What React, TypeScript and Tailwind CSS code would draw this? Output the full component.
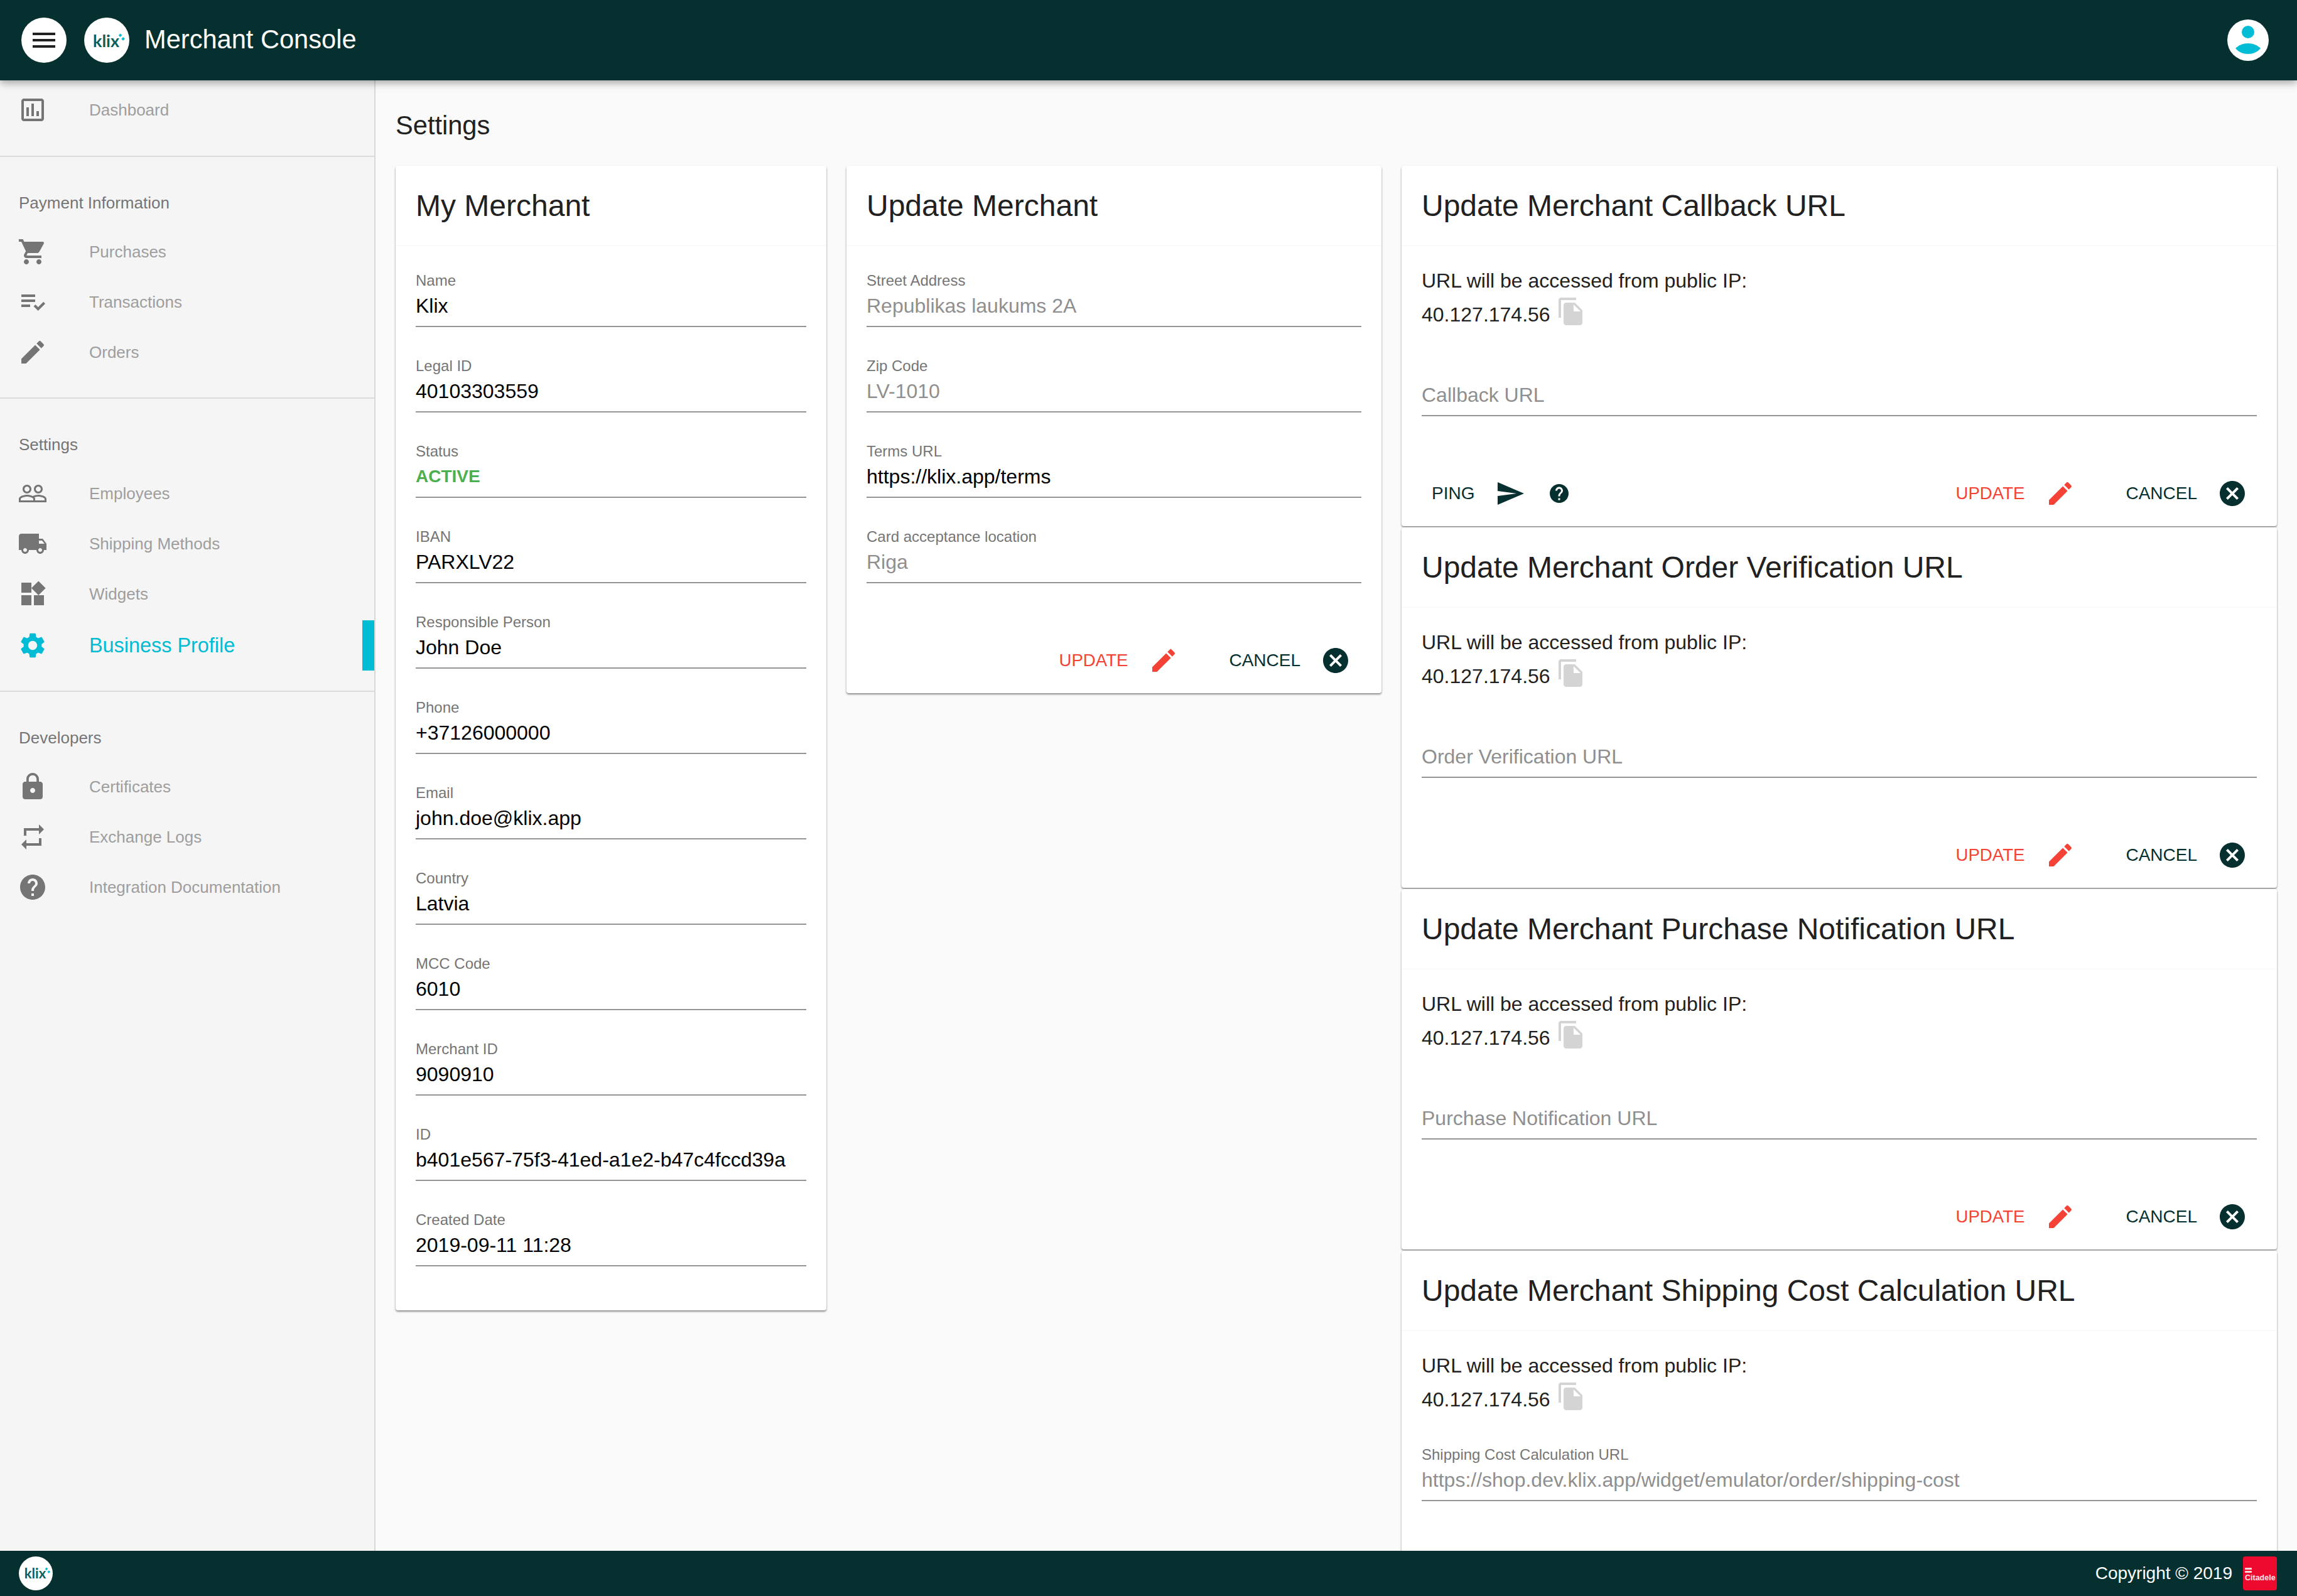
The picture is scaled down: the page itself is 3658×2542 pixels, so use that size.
import React from "react";
import {
  MdCancel,
  MdEdit,
  MdFileCopy,
  MdHelp,
  MdLocalShipping,
  MdLock,
  MdMenu,
  MdOutlineAssessment,
  MdPeopleOutline,
  MdPlaylistAddCheck,
  MdRepeat,
  MdSend,
  MdSettings,
  MdShoppingCart,
  MdWidgets,
} from "react-icons/md";
import type { IconType } from "react-icons";

interface NavEntry {
  label: string;
  icon: IconType;
  active?: boolean;
}

const paymentNav: NavEntry[] = [
  { label: "Purchases", icon: MdShoppingCart },
  { label: "Transactions", icon: MdPlaylistAddCheck },
  { label: "Orders", icon: MdEdit },
];

const settingsNav: NavEntry[] = [
  { label: "Employees", icon: MdPeopleOutline },
  { label: "Shipping Methods", icon: MdLocalShipping },
  { label: "Widgets", icon: MdWidgets },
  { label: "Business Profile", icon: MdSettings, active: true },
];

const developerNav: NavEntry[] = [
  { label: "Certificates", icon: MdLock },
  { label: "Exchange Logs", icon: MdRepeat },
  { label: "Integration Documentation", icon: MdHelp },
];

const merchantFields = [
  { label: "Name", value: "Klix" },
  { label: "Legal ID", value: "40103303559" },
  { label: "Status", value: "ACTIVE", status: true },
  { label: "IBAN", value: "PARXLV22" },
  { label: "Responsible Person", value: "John Doe" },
  { label: "Phone", value: "+37126000000" },
  { label: "Email", value: "john.doe@klix.app" },
  { label: "Country", value: "Latvia" },
  { label: "MCC Code", value: "6010" },
  { label: "Merchant ID", value: "9090910" },
  { label: "ID", value: "b401e567-75f3-41ed-a1e2-b47c4fccd39a" },
  { label: "Created Date", value: "2019-09-11 11:28" },
];

const urlCards = [
  { title: "Update Merchant Callback URL", placeholder: "Callback URL", ping: true, actions: true },
  { title: "Update Merchant Order Verification URL", placeholder: "Order Verification URL", actions: true },
  { title: "Update Merchant Purchase Notification URL", placeholder: "Purchase Notification URL", actions: true },
  {
    title: "Update Merchant Shipping Cost Calculation URL",
    label: "Shipping Cost Calculation URL",
    value: "https://shop.dev.klix.app/widget/emulator/order/shipping-cost",
  },
];

const KlixLogo = ({ big }: { big?: boolean }) => (
  <div
    className={`flex items-center justify-center rounded-full bg-white ${
      big ? "h-[72px] w-[72px] pr-[2px]" : "h-[54px] w-[54px] pr-[2px]"
    }`}
  >
    <span
      className={`relative font-['Lato',sans-serif] font-bold text-[#0b5f5c] ${
        big ? "text-[27px] leading-[27px]" : "text-[22px] leading-[22px]"
      }`}
    >
      klix
      <svg
        viewBox="0 0 12 14"
        className={`absolute ${
          big ? "-right-[10px] top-[2px] h-[14px] w-[12px]" : "-right-[8px] top-[1px] h-[12px] w-[10px]"
        }`}
      >
        <path d="M3.500 .5L6.500 3 3.500 6 .8 3.200zM8 6l3 2.700-3 3-2.700-2.800z" fill="#00bcd4" />
      </svg>
    </span>
  </div>
);

const NavItem = ({ item }: { item: NavEntry }) => {
  const Icon = item.icon;
  return (
    <div className={`relative flex h-[80px] items-center pl-[28px] ${item.active ? "mt-[2px]" : ""}`}>
      <Icon size={48} className={item.active ? "text-[#00bcd4]" : "text-[#757575]"} />
      <span
        className={`ml-[66px] ${
          item.active ? "text-[32.4px] text-[#00bcd4]" : "text-[26px] text-[#9e9e9e]"
        }`}
      >
        {item.label}
      </span>
      {item.active && <div className="absolute right-0 top-0 h-[80px] w-[19px] bg-[#00bcd4]" />}
    </div>
  );
};

const NavGroup = ({ title, items }: { title: string; items: NavEntry[] }) => (
  <div className="border-t-2 border-[#dcdcdc] pb-[32px] pt-[54px]">
    <div className="mb-[19px] pl-[30px] text-[26px] leading-[38px] text-[#757575]">{title}</div>
    {items.map((item) => (
      <NavItem key={item.label} item={item} />
    ))}
  </div>
);

const Field = ({
  label,
  value,
  muted,
  status,
  placeholder,
}: {
  label?: string;
  value?: string;
  muted?: boolean;
  status?: boolean;
  placeholder?: string;
}) => {
  let valueClass = "text-[32px] text-black";
  if (status) valueClass = "text-[28px] font-bold text-[#4caf50]";
  else if (placeholder || muted) valueClass = "text-[32px] text-[#8f8f8f]";

  return (
    <div className="border-b-2 border-[#949494] pb-[12px]">
      <div className="h-[28px] text-[24px] leading-[28px] text-[#757575]">{label}</div>
      <div className={`mt-[6px] h-[40px] leading-[40px] ${valueClass}`}>{value || placeholder}</div>
    </div>
  );
};

const CardTitle = ({ children }: { children: React.ReactNode }) => (
  <div className="flex h-[128px] items-center border-b-2 border-[#fafafa] px-[32px] pt-[2px] text-[48px] text-[#212121]">
    {children}
  </div>
);

const Actions = () => (
  <div className="flex items-center">
    <button className="text-[27.6px] text-[#f44336]">UPDATE</button>
    <MdEdit size={48} className="ml-[33px] text-[#f44336]" />
    <button className="ml-[80px] text-[28px] text-[#05302f]">CANCEL</button>
    <MdCancel size={48} className="ml-[32px] text-[#05302f]" />
  </div>
);

const cardClass = "rounded-[4px] bg-white shadow-[0_2px_3px_rgba(0,0,0,0.45)]";

const App = () => {
  return (
    <div className="flex h-[2542px] w-[3658px] flex-col overflow-hidden bg-[#fafafa] font-['Liberation_Sans',Arial,sans-serif]">
      <header className="relative z-10 flex h-[128px] shrink-0 items-center bg-[#05302f] pl-[34px] pr-[45px] shadow-[0_4px_12px_rgba(0,0,0,0.35)]">
        <button className="flex h-[72px] w-[72px] items-center justify-center rounded-full bg-white">
          <MdMenu size={48} className="text-[#212121]" />
        </button>
        <div className="ml-[28px]">
          <KlixLogo big />
        </div>
        <div className="mb-[2px] ml-[24px] text-[41.6px] text-white">Merchant Console</div>
        <svg viewBox="0 0 66 66" className="ml-auto h-[66px] w-[66px]">
          <circle cx="33" cy="33" r="33" fill="#fff" />
          <circle cx="33" cy="20" r="10" fill="#00bcd4" />
          <path d="M13 46c5-5 12-8 20-8s15 3 20 8c-5 6-12 9-20 9s-15-3-20-9z" fill="#00bcd4" />
        </svg>
      </header>

      <div className="flex min-h-0 flex-1">
        <aside className="w-[598px] shrink-0 border-r-2 border-[#d8d8d8] bg-[#f5f5f5]">
          <div className="pb-[33px] pt-[7px]">
            <NavItem item={{ label: "Dashboard", icon: MdOutlineAssessment }} />
          </div>
          <NavGroup title="Payment Information" items={paymentNav} />
          <NavGroup title="Settings" items={settingsNav} />
          <NavGroup title="Developers" items={developerNav} />
        </aside>

        <main className="min-w-0 flex-1 overflow-hidden px-[32px] pt-[48px]">
          <h1 className="mb-[40px] text-[41.6px] leading-[48px] text-[#212121]">Settings</h1>
          <div className="flex items-start gap-[32px]">
            {/* My Merchant */}
            <section className={`w-[686px] shrink-0 ${cardClass}`}>
              <CardTitle>My Merchant</CardTitle>
              <div className="flex flex-col gap-[48px] px-[32px] pb-[70px] pt-[41px]">
                {merchantFields.map((field) => (
                  <Field key={field.label} label={field.label} value={field.value} status={field.status} />
                ))}
              </div>
            </section>

            {/* Update Merchant */}
            <section className={`w-[852px] shrink-0 ${cardClass}`}>
              <CardTitle>Update Merchant</CardTitle>
              <div className="flex flex-col gap-[48px] px-[32px] pt-[41px]">
                <Field label="Street Address" value="Republikas laukums 2A" muted />
                <Field label="Zip Code" value="LV-1010" muted />
                <Field label="Terms URL" value="https://klix.app/terms" />
                <Field label="Card acceptance location" value="Riga" muted />
              </div>
              <div className="flex justify-end pb-[28px] pr-[49px] pt-[99px]">
                <Actions />
              </div>
            </section>

            {/* URL cards */}
            <div className="flex min-w-0 flex-1 flex-col gap-[2px]">
              {urlCards.map((card) => (
                <section key={card.title} className={`h-[574px] ${cardClass}`}>
                  <CardTitle>{card.title}</CardTitle>
                  <div className="px-[32px] pt-[35px]">
                    <div className="text-[32px] leading-[40px] text-[#212121]">URL will be accessed from public IP:</div>
                    <div className="mt-[14px] flex h-[40px] items-center text-[32px] leading-[40px] text-[#212121]">
                      40.127.174.56
                      <MdFileCopy size={48} className="-mt-[10px] ml-[9px] text-[#d4d4d4]" />
                    </div>
                    <div className="mt-[54px]">
                      <Field label={card.label} value={card.value} placeholder={card.placeholder} muted={Boolean(card.value)} />
                    </div>
                  </div>
                  {card.actions && (
                    <div className="flex items-center justify-between pb-[28px] pl-[48px] pr-[47px] pt-[99px]">
                      <div className="flex items-center">
                        {card.ping && (
                          <>
                            <span className="text-[28px] text-[#05302f]">PING</span>
                            <MdSend size={48} className="ml-[33px] text-[#05302f]" />
                            <MdHelp size={36} className="ml-[36px] text-[#05302f]" />
                          </>
                        )}
                      </div>
                      <Actions />
                    </div>
                  )}
                </section>
              ))}
            </div>
          </div>
        </main>
      </div>

      <footer className="relative z-10 flex h-[72px] shrink-0 items-center bg-[#05302f] pl-[30px] pr-[32px]">
        <KlixLogo />
        <div className="ml-auto text-[28px] text-white">Copyright © 2019</div>
        <div className="ml-[17px] flex h-[54px] w-[54px] flex-col justify-end rounded-[4px] bg-[#ee0a2f] px-[3px] pb-[13px]">
          <div className="mb-[2px] h-[3px] w-[11px] bg-[#fbd5da]" />
          <div className="mb-[2px] h-[3px] w-[11px] bg-[#fbd5da]" />
          <div className="text-[12.5px] font-bold leading-[13px] text-[#fde3e6]">Citadele</div>
        </div>
      </footer>
    </div>
  );
};

export default App;
